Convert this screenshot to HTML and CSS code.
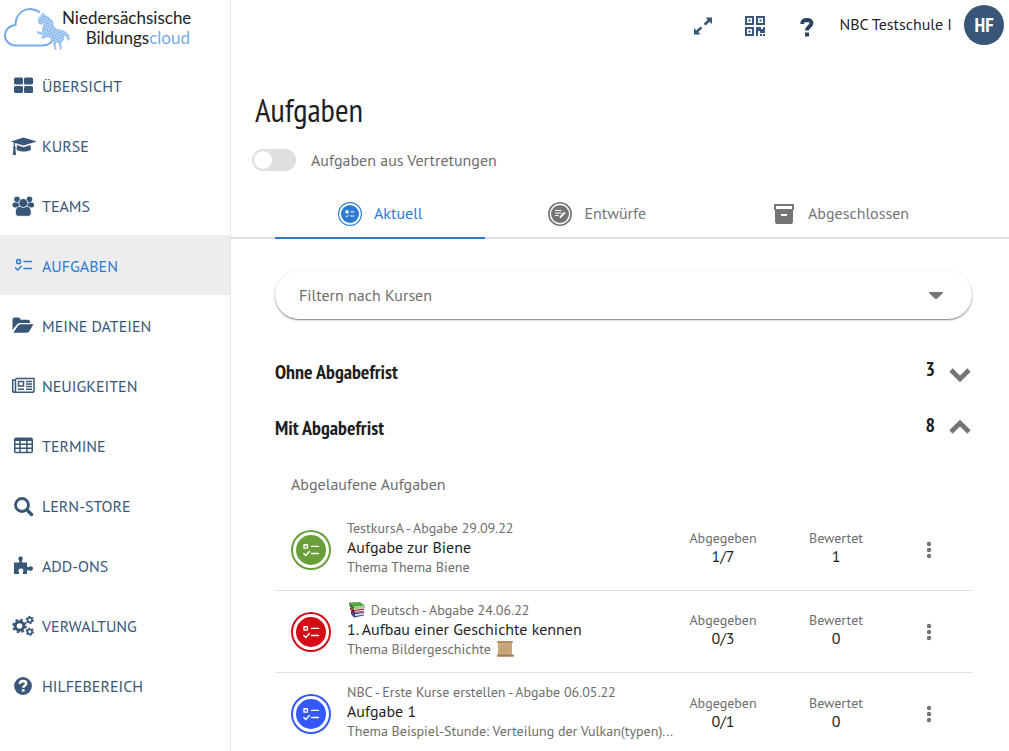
FILE: index.html
```html
<!DOCTYPE html>
<html lang="de">
<head>
<meta charset="utf-8">
<meta name="viewport" content="width=device-width, initial-scale=1">
<title>Aufgaben</title>
<link rel="stylesheet" href="styles.css">
</head>
<body>
<svg class="sprite" aria-hidden="true">
  <symbol id="dots" viewBox="0 0 24 24"><g fill="currentColor"><circle cx="12" cy="6" r="2.200"/><circle cx="12" cy="12" r="2.200"/><circle cx="12" cy="18" r="2.200"/></g></symbol>
  <symbol id="badge" viewBox="0 0 40 40">
    <circle cx="20" cy="20" r="20" fill="currentColor"/><circle cx="20" cy="20" r="16.500" fill="none" stroke="#fff" stroke-width="3"/>
    <g fill="none" stroke="#fff" stroke-width="1.400" stroke-linecap="round" stroke-linejoin="round"><rect x="13" y="14.700" width="3.400" height="3.400"/><path d="M20.500 16.400H27.500M20.500 23.500H27.500M12.800 23.500l2 2 3.600-4"/></g>
  </symbol>
</svg>

<div class="app">
  <aside class="sidebar">
    <a class="logo" href="#">
      <svg class="logo-mark" viewBox="0 0 72 52" aria-hidden="true">
        <defs><pattern id="halftone" width="2.400" height="2.400" patternUnits="userSpaceOnUse" patternTransform="rotate(20)"><rect width="2.400" height="2.400" fill="#c6ddf7"/><circle cx="1.200" cy="1.200" r=".85" fill="#5f9ee4"/></pattern></defs>
        <path d="M40 10.500C34 6 27 6 22 9.500C17.500 12.500 15.500 17 15.500 23C9 23.500 5 28 5 33.500C5 39 9.500 43.500 16 43.500H42C48 43.500 52 40.500 53 36" fill="none" stroke="#78ace8" stroke-width="2"/>
        <path d="M38 17L41 13L43 10L44 12L49 15L53 19L54 25L57 27L62 28L66 30L69 33L70 37L68 39L66 35L64 34L64 38L61 41L62 46L60 48L59 42L56 40L56 46L57 48L54 47L53 40L50 36L47 35L43 37L41 36L43 33L38 32L36 29L42 30L42 27L44 21L41 23L38 21Z" fill="url(#halftone)"/>
      </svg>
      <span class="logo-text">Niedersächsische<br>Bildungs<span class="cloud">cloud</span></span>
    </a>
    <nav class="nav" aria-label="Hauptnavigation">
      <a href="#"><svg viewBox="0 0 26 26"><g fill="currentColor"><rect x="4" y="4.500" width="9" height="7" rx="1.500"/><rect x="14" y="4.500" width="9" height="7" rx="1.500"/><rect x="4" y="13" width="9" height="7" rx="1.500"/><rect x="14" y="13" width="9" height="7" rx="1.500"/></g></svg>ÜBERSICHT</a>
      <a href="#"><svg viewBox="0 0 26 26"><g fill="currentColor"><path d="M1 8.500L13.500 4.500L26.500 8.500L13.500 12.500L5 10V13.500C6.200 14 6 15 5.400 15.500L6 22H2.800L3.500 15.500C2.600 15 2.800 14 3.600 13.400L3.800 9.600Z"/><path d="M7 12L13.500 14.200L20.500 12L21 16.500C18 19.200 10 19.200 6.500 16.500Z"/></g></svg>KURSE</a>
      <a href="#"><svg viewBox="0 0 26 26"><g fill="currentColor"><circle cx="7" cy="6.200" r="2.800"/><circle cx="19.500" cy="6.200" r="2.800"/><rect x="2.500" y="9.400" width="8" height="5" rx="2"/><rect x="16" y="9.400" width="8" height="5" rx="2"/></g><g fill="currentColor" stroke="#fff" stroke-width=".8"><path d="M8.500 13.500H18C20.500 14 21.500 17 21.200 20.500Q21 23.300 18.500 23.300H8Q5.400 23.300 5.400 20.500C5.300 17 6 14 8.500 13.500Z"/><circle cx="13.300" cy="10" r="4.500"/></g></svg>TEAMS</a>
      <a class="active" href="#" aria-current="page"><svg viewBox="0 0 26 26"><g fill="none" stroke="currentColor" stroke-width="1.500"><rect x="6.800" y="6.800" width="3.600" height="3.600" rx=".6"/><path d="M14 8.500H21.500M14 15.500H21.500M5.500 15l2.100 2 3.600-3.800" stroke-linecap="round"/></g></svg>AUFGABEN</a>
      <a href="#"><svg viewBox="0 0 26 26"><path d="M2.500 17V6.500Q2.500 4.500 4.500 4.500H8.500Q10.500 4.500 10.500 6.700H18Q20 6.700 20 8.500V10H10Q8 10 6.500 12ZM3.500 19.500L8 12.800Q9 11.300 11 11.300H23.500L19.500 18Q18.500 19.800 16.500 19.800H3.700Z" fill="currentColor"/></svg>MEINE DATEIEN</a>
      <a href="#"><svg viewBox="0 0 26 26"><g fill="none" stroke="currentColor" stroke-width="1.500"><path d="M5.500 5.500H24V17.500Q24 19.300 22 19.300H4.700Q2.700 19.300 2.700 17.500V7H5.500V17.500Q5.500 19 4.500 19.200"/><rect x="8.500" y="8.500" width="5" height="4.500"/><path d="M16 8.500H22M16 11H22M16 13.500H22M8 16.300H14M16 16.300H22"/></g></svg>NEUIGKEITEN</a>
      <a href="#"><svg viewBox="0 0 26 26"><path d="M6 4.500H21Q23 4.500 23 6.500V18.500Q23 20.300 21 20.300H6Q4 20.300 4 18.500V6.500Q4 4.500 6 4.500Z" fill="currentColor"/><path fill="#fff" d="M5.500 8H9.200V10.500H5.500ZM10.700 8H16.200V10.500H10.700ZM17.700 8H21.500V10.500H17.700ZM5.500 12H9.200V14.500H5.500ZM10.700 12H16.200V14.500H10.700ZM17.700 12H21.500V14.500H17.700ZM5.500 16H9.200V18.800H5.500ZM10.700 16H16.200V18.800H10.700ZM17.700 16H21.500V18.800H17.700Z"/></svg>TERMINE</a>
      <a href="#"><svg viewBox="0 0 26 26"><g fill="none" stroke="currentColor"><circle cx="12" cy="12" r="6.500" stroke-width="2.800"/><path d="M17 17L21.500 21.500" stroke-width="3.400" stroke-linecap="round"/></g></svg>LERN-STORE</a>
      <a href="#"><svg viewBox="0 0 26 26"><path d="M4 9.500H9Q10 9.300 9.200 8C7.500 5.500 8.700 3.500 10.600 3.500C12.600 3.500 13.500 5.500 12 7.500Q11.300 9.200 12.500 9.500H17V13Q17.200 14.600 18.500 14C20.500 12.500 23 13.200 23 15.500C23 17.800 20.500 18.500 18.500 17.200Q17.200 16.500 17 18V21H13V19.500C13.800 17.500 13.500 15.500 11 15.500C8.500 15.500 7.800 17.500 9 19.500V21H4Z" fill="currentColor"/></svg>ADD-ONS</a>
      <a href="#"><svg viewBox="0 0 26 26"><g fill="none" stroke="currentColor"><circle cx="9.500" cy="13" r="4.300" stroke-width="3"/><circle cx="9.500" cy="13" r="6.400" stroke-width="1.800" stroke-dasharray="2.600 2.430"/><circle cx="19.800" cy="7" r="2.300" stroke-width="1.700"/><circle cx="19.800" cy="7" r="3.600" stroke-width="1.200" stroke-dasharray="1.900 1.870"/><circle cx="19.800" cy="18.700" r="2.300" stroke-width="1.700"/><circle cx="19.800" cy="18.700" r="3.600" stroke-width="1.200" stroke-dasharray="1.900 1.870"/></g></svg>VERWALTUNG</a>
      <a href="#"><svg viewBox="0 0 26 26"><circle cx="13" cy="13" r="8.900" fill="currentColor"/><path d="M9.800 11Q10 7.900 13 7.900Q16.200 8.100 16.200 10.600C16.200 12.300 13.200 12.700 13.200 14.800" fill="none" stroke="#fff" stroke-width="2.500"/><path fill="#fff" d="M11.900 16.200H14.500V18.700H11.900Z"/></svg>HILFEBEREICH</a>
    </nav>
  </aside>

  <div class="content">
    <header class="topbar">
      <button class="icon-btn" aria-label="Vollbild"><svg viewBox="0 0 24 24"><path d="M14.500 3.500H21V10L18.600 7.800L14.500 11.500L12.700 9.700L16.700 5.700ZM9.500 12.500L11.300 14.300L7.300 18L9.500 20.500H3V14L5.300 16.500Z" fill="currentColor"/></svg></button>
      <button class="icon-btn" aria-label="QR-Code"><svg viewBox="0 0 24 24"><g fill="none" stroke="currentColor" stroke-width="2"><path d="M3 3H10V10H3ZM14 3H21V10H14ZM3 14H10V21H3Z"/></g><g fill="currentColor"><path d="M5.500 5.500h2v2h-2zM16.500 5.500h2v2h-2zM5.500 16.500h2v2h-2zM13 13h5v2h2v-2h2v6h-5v-2h-2v5h-2zM17 20h2v2h-2zM20 20h2v2h-2z"/></g></svg></button>
      <button class="icon-btn dark" aria-label="Hilfe"><svg viewBox="0 0 24 24"><path d="M7.200 10Q7 6 12 6Q16.700 6.200 16.500 9.200C16.300 12.500 12 12.500 12 16.500" fill="none" stroke="currentColor" stroke-width="3.800"/><rect x="10" y="18.500" width="4" height="4" fill="currentColor"/></svg></button>
      <span class="school">NBC Testschule I</span>
      <button class="avatar" aria-label="Benutzermenü">HF</button>
    </header>

    <main>
      <h1>Aufgaben</h1>
      <label class="switch"><input type="checkbox" role="switch"><span>Aufgaben aus Vertretungen</span></label>

      <div class="tabs" role="tablist">
        <button class="tab selected" role="tab" aria-selected="true"><svg viewBox="0 0 24 24"><circle cx="12" cy="12" r="11.400" fill="none" stroke="currentColor" stroke-width="1.200"/><circle cx="12" cy="12" r="9" fill="currentColor"/><g stroke="#fff" stroke-width="1" fill="none"><rect x="8" y="8.900" width="2" height="2" fill="#fff"/><path d="M12.500 9.900H16.500M12.500 14H16.500M7.500 13.800l1.200 1.200 2.100-2.300"/></g></svg><span>Aktuell</span></button>
        <button class="tab" role="tab" aria-selected="false"><svg viewBox="0 0 24 24"><circle cx="12" cy="12" r="11.200" fill="none" stroke="currentColor" stroke-width="1.600"/><circle cx="12" cy="12" r="9" fill="currentColor"/><path d="M7 8.500H13.500M7 11H13.500M7 13.500H10.500" stroke="#fff" stroke-width="1.100"/><path d="M12 15.500L16.800 10.500" stroke="#fff" stroke-width="1.900"/></svg><span>Entwürfe</span></button>
        <button class="tab" role="tab" aria-selected="false"><svg viewBox="0 0 24 24"><path fill="currentColor" fill-rule="evenodd" d="M3 2H21Q22 2 22 3V8H21V20Q21 22 19 22H5Q3 22 3 20V8H2V3Q2 2 3 2ZM4 4V7H20V4ZM9 12V14H15V12Z"/></svg><span>Abgeschlossen</span></button>
      </div>

      <div class="panel">
        <div class="filter">
          <select aria-label="Filtern nach Kursen"><option>Filtern nach Kursen</option></select>
          <svg viewBox="0 0 24 24" aria-hidden="true"><path d="M5.500 9H18.500Q19.500 9.200 18.700 10.200L13 15.700Q12 16.500 11 15.700L5.300 10.200Q4.500 9.200 5.500 9Z" fill="currentColor"/></svg>
        </div>

        <button class="group" aria-expanded="false"><span class="group-title">Ohne Abgabefrist</span><span class="count">3</span><svg viewBox="0 0 24 24"><path d="M3 9L12 18L21 9" fill="none" stroke="currentColor" stroke-width="4.600"/></svg></button>
        <button class="group" aria-expanded="true"><span class="group-title">Mit Abgabefrist</span><span class="count">8</span><svg viewBox="0 0 24 24"><path d="M3 15L12 6L21 15" fill="none" stroke="currentColor" stroke-width="4.600"/></svg></button>

        <h2>Abgelaufene Aufgaben</h2>
        <ul class="tasks">
          <li class="task">
            <svg class="badge green"><use href="#badge"/></svg>
            <div class="info"><div class="meta">TestkursA - Abgabe 29.09.22</div><a class="name" href="#">Aufgabe zur Biene</a><div class="meta">Thema Thema Biene</div></div>
            <div class="stat"><span class="meta">Abgegeben</span><span>1/7</span></div>
            <div class="stat"><span class="meta">Bewertet</span><span>1</span></div>
            <button class="more" aria-label="Menü"><svg><use href="#dots"/></svg></button>
          </li>
          <li class="task">
            <svg class="badge red"><use href="#badge"/></svg>
            <div class="info"><div class="meta"><svg class="emoji" viewBox="0 0 18 18" role="img" aria-label="Bücher"><path d="M1 1.500L12 1L17 4.500L6 6Z" fill="#59a744"/><path d="M1 1.500L6 6V9L1.500 5Z" fill="#28762d"/><path d="M6 6L17 4.500V7L6 8.600Z" fill="#a9cda0"/><path d="M2 6L6 9L16 7.500V10.500L6 12L2 8.500Z" fill="#b32432"/><path d="M7 10L16 8.800V9.800L7 11Z" fill="#eee"/><path d="M3 9.500L6 12L16 11V14.500L6 16.500L3 13Z" fill="#39478b"/><path d="M7 13.200L16 12V13.500L7 15Z" fill="#ececf3"/><path d="M4 8L6 9.500V12L4 10.500Z" fill="#76152a"/></svg> Deutsch - Abgabe 24.06.22</div><a class="name" href="#">1. Aufbau einer Geschichte kennen</a><div class="meta">Thema Bildergeschichte <svg class="emoji" viewBox="0 0 18 18" role="img" aria-label="Schriftrolle"><path d="M2 2H16V15H2Z" fill="#c7a67a"/><path d="M3 4H15V14H3Z" fill="#cdae82"/><path d="M4 6H14M4 8H14M4 10H14M4 12H14" stroke="#b59164" stroke-width=".7"/><rect x="1" y="1" width="16" height="2" rx="1" fill="#b58d60"/><rect x="1" y="14.500" width="17" height="2.200" rx="1" fill="#a57b50"/></svg></div></div>
            <div class="stat"><span class="meta">Abgegeben</span><span>0/3</span></div>
            <div class="stat"><span class="meta">Bewertet</span><span>0</span></div>
            <button class="more" aria-label="Menü"><svg><use href="#dots"/></svg></button>
          </li>
          <li class="task">
            <svg class="badge blue"><use href="#badge"/></svg>
            <div class="info"><div class="meta">NBC - Erste Kurse erstellen - Abgabe 06.05.22</div><a class="name" href="#">Aufgabe 1</a><div class="meta">Thema Beispiel-Stunde: Verteilung der Vulkan(typen)...</div></div>
            <div class="stat"><span class="meta">Abgegeben</span><span>0/1</span></div>
            <div class="stat"><span class="meta">Bewertet</span><span>0</span></div>
            <button class="more" aria-label="Menü"><svg><use href="#dots"/></svg></button>
          </li>
        </ul>
      </div>
    </main>
  </div>
</div>
</body>
</html>
```
FILE: styles.css
```css
:root {
  --navy: #385778;
  --blue: #2d7ad2;
  --grey: #6e6e6e;
  --ink: #1f1f1f;
  --line: #e0e0e0;
  --narrow: "PT Sans Narrow", "Liberation Sans Narrow", "Noto Sans", sans-serif;
}
* { box-sizing: border-box; }
body {
  margin: 0;
  background: #fff;
  color: var(--ink);
  font: 16px/20px "PT Sans", "Noto Sans", sans-serif;
}
button { border: 0; padding: 0; background: none; font: inherit; color: inherit; cursor: pointer; }
a { color: inherit; text-decoration: none; }
svg { flex: none; }
.sprite { position: absolute; width: 0; height: 0; }

.app { display: flex; min-height: 100vh; }
.sidebar { flex: none; width: 231px; border-right: 1px solid #e8e8e8; }
.logo { display: flex; align-items: center; height: 55px; }
.logo-mark { width: 72px; height: 52px; margin-right: -10px; }
.logo-text {
  width: 128px;
  text-align: right;
  white-space: nowrap;
  font: 17px/20px Lato, sans-serif;
  color: #222;
}
.cloud { color: #78ace8; }
.nav a {
  display: flex;
  align-items: center;
  gap: 6px;
  height: 60px;
  padding: 1px 10px 0;
  color: var(--navy);
}
.nav svg { width: 26px; height: 26px; }
.nav .active { background: #ededed; color: var(--blue); }

.content { flex: 1; min-width: 0; }
.topbar { display: flex; align-items: center; justify-content: flex-end; height: 50px; padding-right: 5px; }
.icon-btn { width: 24px; height: 24px; margin-top: 2px; margin-right: 28px; color: var(--navy); }
.icon-btn.dark { color: #2b415c; margin-right: 20px; }
.icon-btn svg { display: block; width: 24px; height: 24px; }
.school { margin-right: 12px; padding-bottom: 2px; white-space: nowrap; }
.avatar {
  width: 40px;
  height: 40px;
  border-radius: 50%;
  background: var(--navy);
  color: #fff;
  font: bold 20px/40px var(--narrow);
}

h1 { margin: 0; padding: 39px 24px 0; font: 33px/42px var(--narrow); }
.switch { display: flex; align-items: center; gap: 15px; margin: 17px 21px 0; height: 24px; color: var(--grey); }
.switch input {
  appearance: none;
  width: 44px;
  height: 22px;
  margin: 0;
  padding: 2px;
  border-radius: 11px;
  background: #dfdfdf;
}
.switch input::before { content: ""; display: block; width: 18px; height: 18px; border-radius: 50%; background: #fff; }
.switch input:checked { background: var(--blue); }
.switch input:checked::before { margin-left: auto; }

.tabs { display: flex; margin-top: 18px; padding: 0 37px 0 44px; border-bottom: 2px solid var(--line); }
.tab {
  display: flex;
  flex: 1 1 auto;
  align-items: center;
  justify-content: center;
  gap: 12px;
  height: 49px;
  margin-bottom: -2px;
  border-bottom: 2px solid transparent;
  color: #757575;
}
.tab svg { width: 24px; height: 24px; }
.tab span { padding-bottom: 2px; }
.tab.selected { color: var(--blue); border-color: var(--blue); }

.panel { padding: 32px 37px 0 44px; }
.filter {
  display: flex;
  align-items: center;
  height: 48px;
  margin-bottom: 26px;
  padding-right: 24px;
  border-radius: 24px;
  box-shadow: 0 1px 1px rgba(0, 0, 0, .35), 0 1px 3px rgba(0, 0, 0, .2);
}
.filter select {
  appearance: none;
  flex: 1;
  height: 48px;
  margin-right: -24px;
  padding: 0 24px;
  border: 0;
  background: none;
  color: var(--grey);
  font: inherit;
}
.filter svg { width: 24px; height: 24px; color: #757575; pointer-events: none; }

.group { display: flex; align-items: center; width: 100%; height: 56px; text-align: left; font: bold 20px/24px var(--narrow); }
.group-title { flex: 1; padding-bottom: 2px; }
.count { padding-bottom: 8px; margin-right: 13px; }
.group svg { width: 24px; height: 24px; color: #757575; }

h2 { margin: 0; padding: 17px 16px 15px; font-weight: normal; font-size: 16px; line-height: 20px; color: var(--grey); }
.tasks { margin: 0; padding: 0; list-style: none; }
.task { display: flex; align-items: center; height: 82px; padding: 0 31px 0 16px; border-bottom: 1px solid var(--line); }
.task:last-child { border-bottom: 0; }
.badge { width: 40px; height: 40px; margin-right: 16px; }
.green { color: #689f38; }
.red { color: #d50b15; }
.blue { color: #3558fa; }
.info { flex: 1; min-width: 0; padding-bottom: 5px; }
.info .meta { overflow: hidden; text-overflow: ellipsis; white-space: nowrap; }
.meta { color: var(--grey); font-size: 14px; line-height: 20px; }
.name { display: block; line-height: 19px; }
.emoji { width: 18px; height: 18px; margin: 0 1px; vertical-align: -4px; }
.stat { display: flex; flex-direction: column; align-items: center; width: 96px; padding-bottom: 4px; line-height: 18px; }
.stat + .stat { margin-left: 17px; }
.stat .meta { line-height: 17px; }
.more { width: 24px; height: 24px; margin-left: 33px; color: #757575; }
.more svg { display: block; width: 24px; height: 24px; }
```
